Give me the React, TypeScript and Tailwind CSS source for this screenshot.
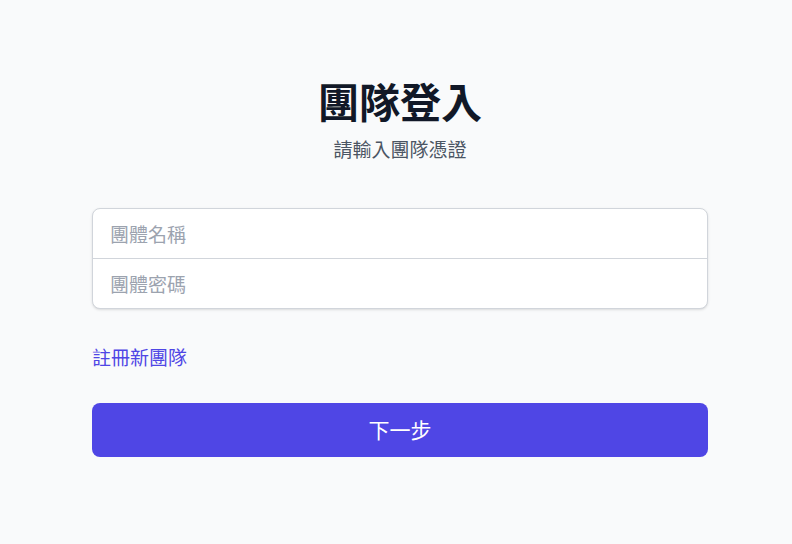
import { useState } from "react";

export default function App() {
  const [name, setName] = useState("");
  const [password, setPassword] = useState("");

  return (
    <div
      className="min-h-screen bg-[#f9fafb] pt-[76px]"
      style={{ fontFamily: '"Noto Sans CJK TC", "Noto Sans", sans-serif' }}
    >
      <div className="ml-[92px] w-[616px]">
        {/* Header */}
        <h1 className="text-center text-[41px] font-bold leading-[49px] text-[#111827]">
          團隊登入
        </h1>
        <p className="mt-[10px] text-center text-[19px] leading-[28px] text-[#4b5563]">
          請輸入團隊憑證
        </p>

        {/* Inputs */}
        <div className="mt-[45px] overflow-hidden rounded-lg border border-[#d1d5db] bg-white shadow-sm">
          <input
            type="text"
            value={name}
            onChange={(e) => setName(e.target.value)}
            placeholder="團體名稱"
            className="block h-[50px] w-full border-b border-[#d1d5db] px-[17px] text-[19px] text-[#111827] placeholder:text-[#9ca3af] focus:outline-none"
          />
          <input
            type="password"
            value={password}
            onChange={(e) => setPassword(e.target.value)}
            placeholder="團體密碼"
            className="block h-[49px] w-full px-[17px] text-[19px] text-[#111827] placeholder:text-[#9ca3af] focus:outline-none"
          />
        </div>

        {/* Register link */}
        <div className="mt-[34px]">
          <a href="#" className="text-[19px] leading-[28px] text-[#4f46e5] hover:text-[#6366f1]">
            註冊新團隊
          </a>
        </div>

        {/* Submit */}
        <button
          type="button"
          className="mt-8 flex h-[54px] w-full items-center justify-center rounded-lg bg-[#4f46e5] text-[21px] text-white hover:bg-[#4338ca]"
        >
          下一步
        </button>
      </div>
    </div>
  );
}
